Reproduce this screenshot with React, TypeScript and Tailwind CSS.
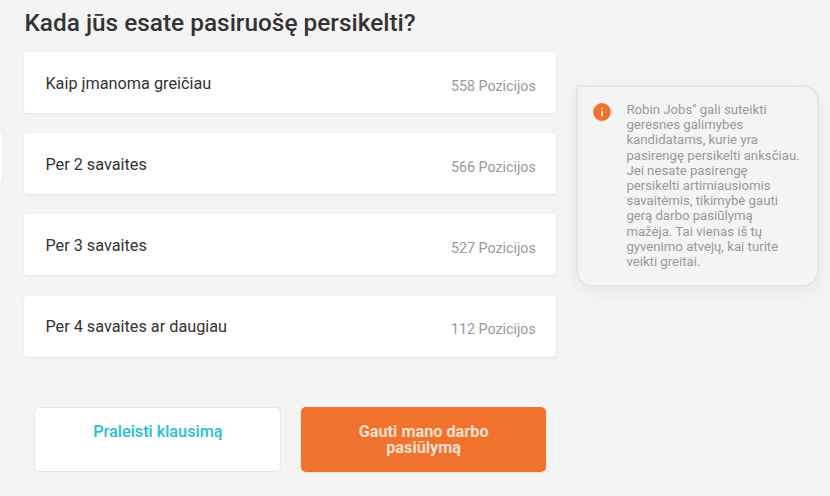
import React from 'react';

const options = [
  { label: 'Kaip įmanoma greičiau', positions: 558 },
  { label: 'Per 2 savaites', positions: 566 },
  { label: 'Per 3 savaites', positions: 527 },
  { label: 'Per 4 savaites ar daugiau', positions: 112 },
];

function InfoIcon() {
  return (
    <svg viewBox="0 0 18 18" className="mt-[16px] h-[18px] w-[18px] shrink-0">
      <circle cx="9" cy="9" r="8.9" fill="#f0722c" />
      <rect x="8.1" y="4.6" width="1.8" height="1.8" fill="#fbe3d5" />
      <rect x="8.1" y="7.8" width="1.8" height="5.5" fill="#fbe3d5" />
    </svg>
  );
}

function App() {
  return (
    <div className="flex h-[496px] w-[830px] overflow-hidden bg-[#f4f4f4] font-['Roboto',sans-serif]">
      {/* Edge of the previous step card */}
      <div className="mt-[133px] h-[48px] w-[2px] shrink-0 rounded-r-[2px] bg-white shadow-[0_0_2px_rgba(0,0,0,0.08)]" />

      <main className="ml-[22.4px] w-[531.4px] shrink-0">
        <h1 className="mt-[7px] h-[45px] text-[24.4px] leading-[32px] font-medium whitespace-nowrap text-[#333333]">
          Kada jūs esate pasiruošę persikelti?
        </h1>

        <div className="flex flex-col gap-[20.2px]">
          {options.map((option) => (
            <button
              key={option.label}
              type="button"
              className="flex h-[61px] w-full items-center justify-between rounded-[4px] bg-white pr-[20px] pl-[21px] shadow-[0_1px_3px_rgba(0,0,0,0.07)]"
            >
              <span className="mt-[2px] text-[16.25px] leading-[20px] text-[#333333]">{option.label}</span>
              <span className="mt-[6px] text-[14.25px] leading-[20px] text-[#999999]">
                {option.positions} Pozicijos
              </span>
            </button>
          ))}
        </div>

        <div className="mt-[50px] ml-[10px] flex gap-[20px]">
          <button
            type="button"
            className="flex h-[65px] w-[247px] shrink-0 justify-center rounded-[5px] border border-[#e8e8e8] bg-white pt-[16px] text-[16.25px] leading-[16px] font-medium text-[#26bfd3]"
          >
            Praleisti klausimą
          </button>
          <button
            type="button"
            className="flex h-[65px] w-[244.5px] shrink-0 justify-center rounded-[5px] bg-[#f1722c] px-[50px] pt-[17px] text-[16.25px] leading-[16px] font-bold text-[#fde0cf] shadow-[0_1px_3px_rgba(0,0,0,0.08)]"
          >
            Gauti mano darbo pasiūlymą
          </button>
        </div>
      </main>

      <aside className="mt-[85px] ml-[20px] flex h-[202px] w-[243px] shrink-0 rounded-[16px] rounded-tl-none border-2 border-[#e5e5e5] pl-[15px] shadow-[0_4px_16px_rgba(0,0,0,0.06)]">
        <InfoIcon />
        <p className="mt-[15px] ml-[15.6px] text-[13.2px] leading-[15.2px] whitespace-nowrap text-[#999999]">
          Robin Jobs" gali suteikti
          <br />
          geresnes galimybes
          <br />
          kandidatams, kurie yra
          <br />
          pasirengę persikelti anksčiau.
          <br />
          Jei nesate pasirengę
          <br />
          persikelti artimiausiomis
          <br />
          savaitėmis, tikimybė gauti
          <br />
          gerą darbo pasiūlymą
          <br />
          mažėja. Tai vienas iš tų
          <br />
          gyvenimo atvejų, kai turite
          <br />
          veikti greitai.
        </p>
      </aside>
    </div>
  );
}

export default App;
